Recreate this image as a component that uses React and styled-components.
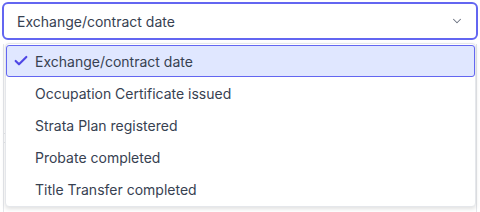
import React from 'react';
import styled, { createGlobalStyle } from 'styled-components';
import { Check, ChevronDown } from 'lucide-react';

const Global = createGlobalStyle`
  html, body { margin: 0; padding: 0; background: #fff; }
  body { font-family: Inter, "Noto Sans", sans-serif; }
`;

const Page = styled.div`
  position: relative;
  width: 480px;
  height: 212px;
  overflow: hidden;
  padding: 2px;
  box-sizing: border-box;
  font-family: Inter, "Noto Sans", sans-serif;
`;

const Select = styled.div`
  display: flex;
  align-items: center;
  justify-content: space-between;
  width: 100%;
  height: 38px;
  padding: 0 12px 0 13px;
  box-sizing: border-box;
  border: 2px solid #6366f1;
  border-radius: 6px;
  background: #fff;
  font-family: Inter, "Noto Sans", sans-serif;
  font-size: 14px;
  color: #374151;
  cursor: pointer;
`;

const Behind = styled.div`
  margin: 4px 1px 0;
  height: 200px;
  border-left: 1px solid #e5e7eb;
  border-right: 1px solid #e5e7eb;
  display: flex;
  flex-direction: column;
`;

const BehindRow = styled.div`
  height: ${p => p.h}px;
  border-bottom: 1px solid #e5e7eb;
  flex-shrink: 0;
`;

const BehindText = styled.div`
  padding: 0 0 0 30px;
  margin-top: 24px;
  font-size: 12px;
  color: #9ca3af;
`;

const Menu = styled.ul`
  position: absolute;
  top: 43px;
  left: 5px;
  width: 471px;
  margin: 0;
  padding: 1px 0;
  list-style: none;
  box-sizing: border-box;
  background: #fff;
  border: 1px solid #e5e7eb;
  border-radius: 4px;
  box-shadow: 0 2px 4px rgba(0, 0, 0, 0.12);
`;

const Item = styled.li`
  display: flex;
  align-items: center;
  gap: 6px;
  height: 32px;
  padding: 0 0 0 ${p => (p.selected ? 6 : 28)}px;
  box-sizing: border-box;
  font-family: Inter, "Noto Sans", sans-serif;
  font-size: 14px;
  color: #374151;
  border: 1px solid ${p => (p.selected ? '#6366f1' : 'transparent')};
  border-radius: 3px;
  background: ${p => (p.selected ? '#e0e7ff' : 'transparent')};
`;

const options = [
  'Exchange/contract date',
  'Occupation Certificate issued',
  'Strata Plan registered',
  'Probate completed',
  'Title Transfer completed',
];

export default function App() {
  const value = options[0];
  return (
    <Page>
      <Global />
      <Select>
        <span>{value}</span>
        <ChevronDown size={14} color="#6b7280" strokeWidth={1.8} />
      </Select>
      <Behind>
        <BehindRow h={89} />
        <BehindRow h={8} />
        <BehindText>Settlement details</BehindText>
      </Behind>
      <Menu>
        {options.map(o => (
          <Item key={o} selected={o === value}>
            {o === value && <Check size={16} color="#4f46e5" strokeWidth={3.2} />}
            {o}
          </Item>
        ))}
      </Menu>
    </Page>
  );
}
